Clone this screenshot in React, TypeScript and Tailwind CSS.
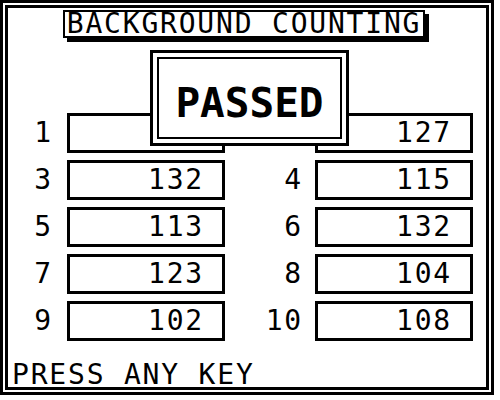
type Cell = { label: string; value: string };

// the popup covers the "2" label and the first field's value, so both stay blank
const rows: [Cell, Cell][] = [
  [{ label: "1", value: "" }, { label: "", value: "127" }],
  [{ label: "3", value: "132" }, { label: "4", value: "115" }],
  [{ label: "5", value: "113" }, { label: "6", value: "132" }],
  [{ label: "7", value: "123" }, { label: "8", value: "104" }],
  [{ label: "9", value: "102" }, { label: "10", value: "108" }],
];

const mono = "font-['DejaVu_Sans_Mono','Liberation_Mono',monospace]";

const Field: React.FC<{ value: string }> = ({ value }) => (
  <div className="w-[158px] h-[40px] border-[3px] border-black flex items-center justify-end pr-[18px] slashed-zero">
    {value}
  </div>
);

export default function App() {
  return (
    <div
      className={`relative w-[500px] h-[400px] bg-white text-black ${mono} text-[28px] leading-none tracking-[1.8px]`}
    >
      {/* double outer frame */}
      <div className="w-[494px] h-[395px] border-[3px] border-black p-[2px]">
        <div className="h-full border-[3px] border-black flex flex-col">
          <div className="ml-[55px] mt-[2px] w-[362px] h-[28px] border-2 border-black bg-white shadow-[4px_4px_0_#000] flex items-center justify-center">
            BACKGROUND COUNTING
          </div>

          <div className="mt-[75px] flex flex-col gap-[7px]">
            {rows.map(([left, right]) => (
              <div key={left.label} className="flex items-center">
                <div className="w-[45px] text-right">{left.label}</div>
                <div className="ml-[14px]">
                  <Field value={left.value} />
                </div>
                <div className="w-[78px] text-right">{right.label}</div>
                <div className="ml-[12px]">
                  <Field value={right.value} />
                </div>
              </div>
            ))}
          </div>

          <div className="mt-auto pl-[4px] leading-[24px]">PRESS ANY KEY</div>
        </div>
      </div>

      {/* result popup over the first row */}
      <div className="absolute left-[150px] top-[50px] w-[199px] h-[96px] border-[3px] border-black bg-white p-[4px]">
        <div className="h-full border-2 border-black flex items-center justify-center">
          <span className="mt-[10px] text-[41px] font-bold tracking-normal">PASSED</span>
        </div>
      </div>
    </div>
  );
}
